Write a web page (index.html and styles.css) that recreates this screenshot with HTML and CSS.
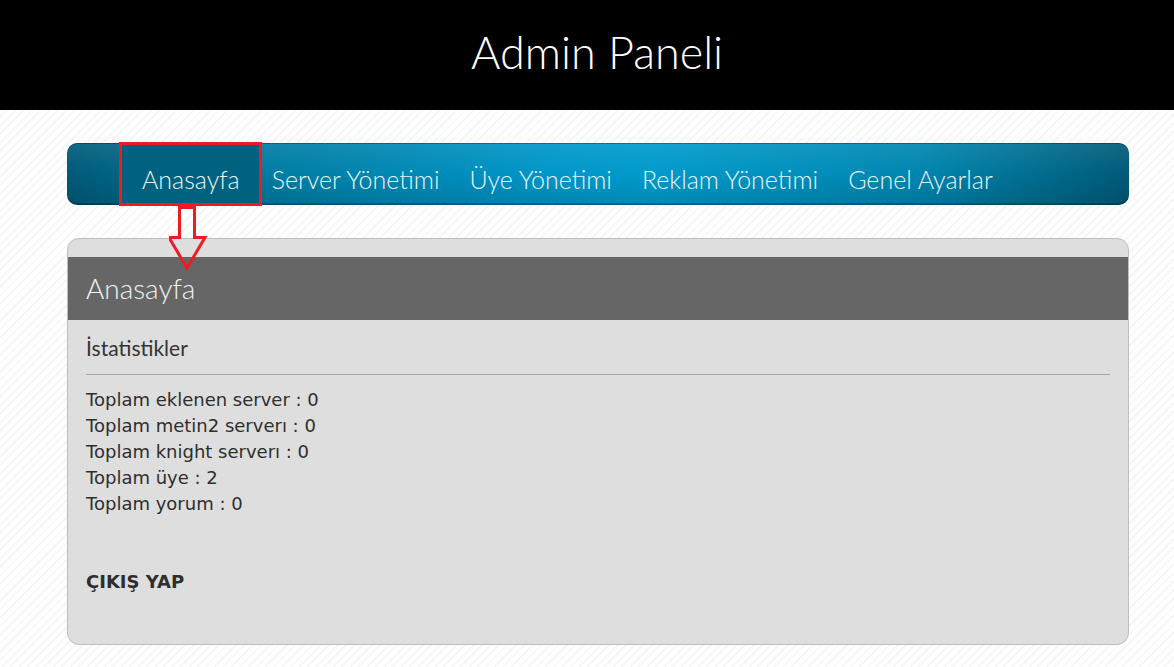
FILE: index.html
```html
<!DOCTYPE html>
<html lang="tr">
<head>
    <meta charset="UTF-8">
    <meta name="viewport" content="width=device-width, initial-scale=1.0">
    <title>Admin Paneli</title>
    <link rel="stylesheet" href="styles.css">
</head>
<body>
    <div class="header">
        <h1 class="title">Admin Paneli</h1>
    </div>

    <div class="wrapper">
        <div class="menu">
            <a href="#" class="menu-item active">Anasayfa
                <svg class="mark-arrow" width="40" height="66" viewBox="0 0 40 66">
                    <path d="M10.5 2.5 H25.5 V32.5 H36 L18 63 L0 32.5 H10.5 Z" fill="none" stroke="#ed1c24" stroke-width="3"/>
                </svg>
            </a>
            <a href="#" class="menu-item">Server Yönetimi</a>
            <a href="#" class="menu-item">Üye Yönetimi</a>
            <a href="#" class="menu-item">Reklam Yönetimi</a>
            <a href="#" class="menu-item">Genel Ayarlar</a>
        </div>

        <div class="panel">
            <h2 class="panel-title">Anasayfa</h2>
            <div class="panel-body">
                <h3 class="section-title">İstatistikler</h3>
                <div class="stats">
                    Toplam eklenen server : 0<br>
                    Toplam metin2 serverı : 0<br>
                    Toplam knight serverı : 0<br>
                    Toplam üye : 2<br>
                    Toplam yorum : 0<br>
                    <br>
                    <br>
                    <a href="#" class="logout">ÇIKIŞ YAP</a>
                </div>
            </div>
        </div>
    </div>
</body>
</html>
```

FILE: styles.css
```css
body {
    margin: 0;
    font-family: 'DejaVu Sans', sans-serif;
    background: repeating-linear-gradient(135deg, #ffffff 0, #ffffff 4px, #f6f6f6 4px, #f6f6f6 6px);
    min-height: 100vh;
}

.header {
    background: #000;
    height: 110px;
    display: flex;
    justify-content: center;
    align-items: center;
}

.title {
    margin: 0;
    font-family: 'Lato', sans-serif;
    font-weight: 300;
    font-size: 45px;
    color: #fff;
    padding: 0 0 6px 20px;
}

.wrapper {
    margin: 33px 45px 0 67px;
}

.menu {
    height: 62px;
    border-radius: 10px;
    background:
        linear-gradient(180deg, rgba(255,255,255,0.08) 0%, rgba(0,0,0,0) 50%, rgba(0,0,0,0.12) 100%),
        linear-gradient(90deg, #005a78 0%, #00789c 15%, #0096c8 45%, #009bcc 55%, #0086b0 80%, #005a78 100%);
    box-shadow: inset 0 -2px 0 rgba(0,0,0,0.25), inset 0 1px 0 rgba(0,0,0,0.3);
    display: flex;
    align-items: stretch;
    padding-left: 53px;
}

.menu-item {
    position: relative;
    display: flex;
    align-items: center;
    padding: 10px 15px 0;
    font-family: 'Lato', sans-serif;
    font-weight: 300;
    font-size: 25px;
    color: #e8f4f8;
    text-decoration: none;
}

.menu-item.active {
    background: #00627f;
    padding: 10px 21px 0 22px;
    margin-right: -4px;
    outline: 3px solid #ed1c24;
    outline-offset: -2px;
}

.mark-arrow {
    position: absolute;
    left: 49px;
    top: 62px;
}

.panel {
    margin-top: 33px;
    background: #dedede;
    border: 1px solid #bdbdbd;
    border-radius: 12px;
    padding-top: 18px;
    height: 387px;
}

.panel-title {
    margin: 0;
    background: #666;
    height: 63px;
    line-height: 63px;
    padding-left: 18px;
    font-family: 'Lato', sans-serif;
    font-weight: 300;
    font-size: 28px;
    color: #f2f2f2;
}

.panel-body {
    padding: 0 18px;
}

.section-title {
    margin: 0;
    padding: 15px 0 14px;
    border-bottom: 1px solid #a8a8a8;
    font-family: 'Lato', sans-serif;
    font-weight: 400;
    font-size: 21px;
    color: #333;
}

.stats {
    padding-top: 12px;
    font-size: 18px;
    line-height: 26px;
    color: #2e2e2e;
}

.logout {
    font-weight: bold;
    color: #2e2e2e;
    text-decoration: none;
}
```
